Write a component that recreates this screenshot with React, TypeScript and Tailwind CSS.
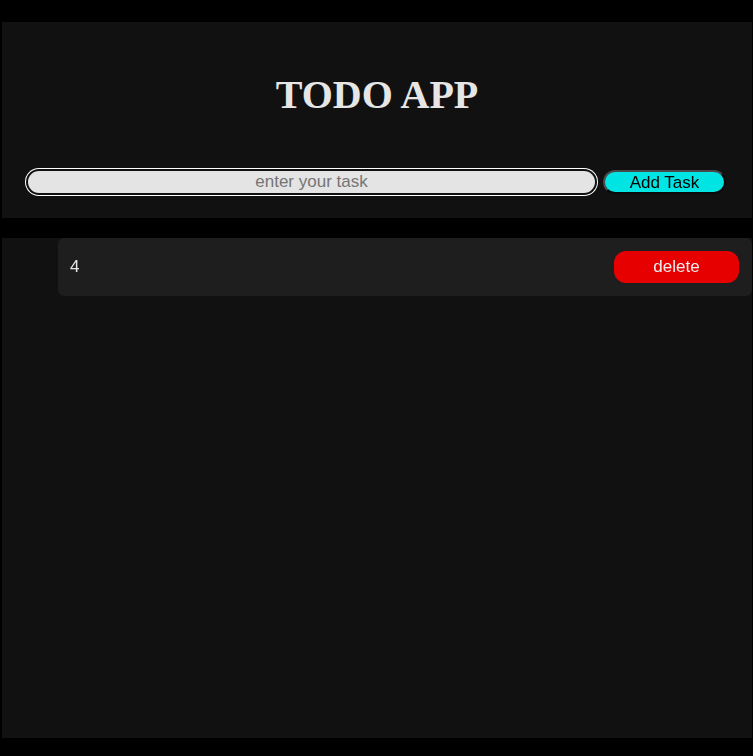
import { useState } from "react";

type Task = { id: number; text: string };

export default function App() {
    const [value, setValue] = useState("");
    const [tasks, setTasks] = useState<Task[]>([{ id: 1, text: "4" }]);

    const addTask = () => {
        if (!value.trim()) return;
        setTasks([...tasks, { id: Date.now(), text: value }]);
        setValue("");
    };

    return (
        <main className="min-h-[756px] bg-black pt-[22px] pl-[2px] pr-px pb-[18px] font-['Liberation_Sans',Arial,sans-serif]">
            {/* Header panel */}
            <section className="h-[196px] bg-[#111111] pt-[53px]">
                <h1 className="text-center text-[40px] leading-[40px] font-bold text-[#e6e6e6] font-['Liberation_Serif','Times_New_Roman',serif]">
                    TODO APP
                </h1>
                <div className="mt-[55px] flex items-center gap-2 px-[26px]">
                    <input
                        autoFocus
                        value={value}
                        onChange={e => setValue(e.target.value)}
                        placeholder="enter your task"
                        className="h-[22px] flex-1 rounded-full bg-[#e4e4e4] text-center text-[17px] text-black placeholder:text-[#757575] outline-none shadow-[0_0_0_2px_#101010,0_0_0_3px_#ffffff]"
                    />
                    <button
                        onClick={addTask}
                        className="h-6 w-[123px] rounded-full border-2 border-[#4a4a4a] border-r-[#0a0a0a] border-b-[#0a0a0a] bg-[#00e4e4] text-[17px] leading-none text-black"
                    >
                        Add Task
                    </button>
                </div>
            </section>

            {/* Task list */}
            <section className="mt-5 h-[500px] bg-[#111111]">
                {tasks.map(task => (
                    <div
                        key={task.id}
                        className="ml-14 flex h-[58px] items-center justify-between rounded-md bg-[#1e1e1e] pl-3 pr-[13px]"
                    >
                        <span className="text-[17px] text-[#e6e6e6]">{task.text}</span>
                        <button
                            onClick={() => setTasks(tasks.filter(t => t.id !== task.id))}
                            className="h-8 w-[125px] rounded-xl bg-[#e60000] text-[17px] text-[#eeeeee]"
                        >
                            delete
                        </button>
                    </div>
                ))}
            </section>
        </main>
    );
}
